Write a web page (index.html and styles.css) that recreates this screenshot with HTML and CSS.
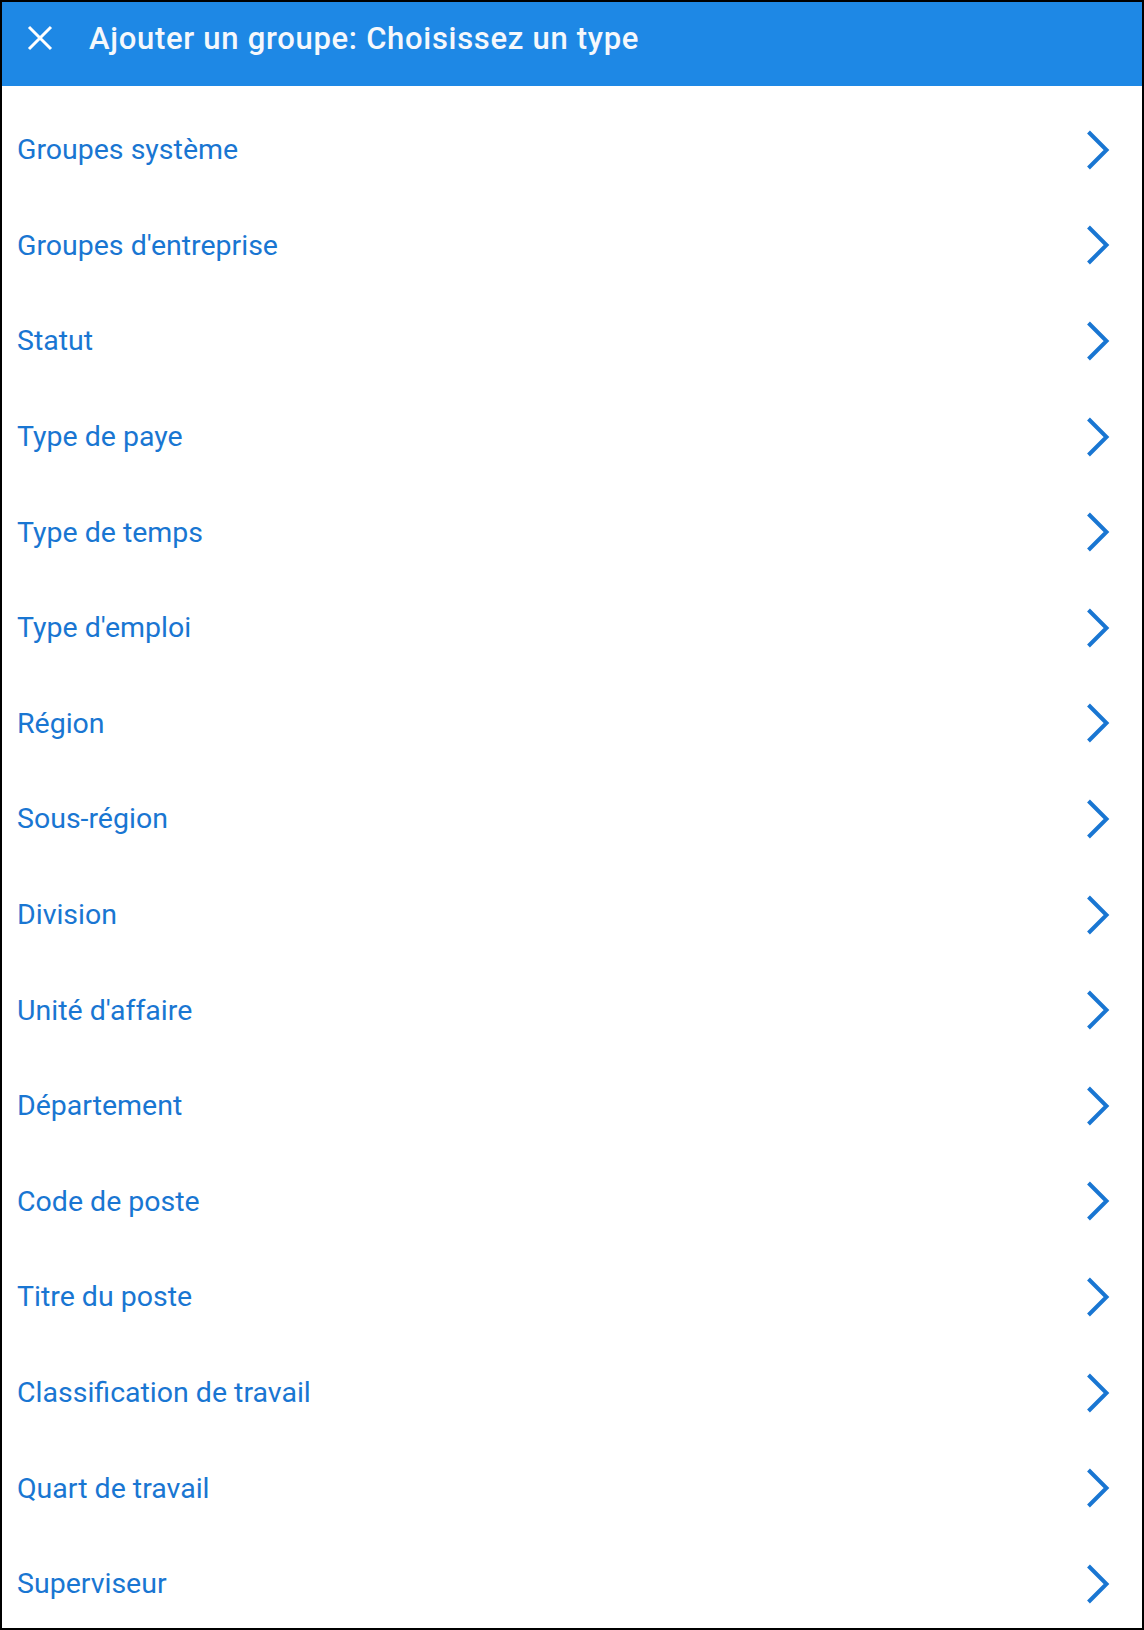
FILE: index.html
```html
<!DOCTYPE html>
<html lang="fr">
<head>
    <meta charset="UTF-8">
    <meta name="viewport" content="width=device-width, initial-scale=1.0">
    <title>Ajouter un groupe</title>
    <link rel="stylesheet" href="styles.css">
</head>
<body>
    <div class="dialog">
        <header class="bar">
            <button class="close" type="button" aria-label="Fermer">
                <svg viewBox="0 0 26 26" width="26" height="26">
                    <path d="M2 2L24 24M24 2L2 24" stroke="#fff" stroke-width="3" fill="none"/>
                </svg>
            </button>
            <h1>Ajouter un groupe: Choisissez un type</h1>
        </header>

        <ul class="types">
            <li><span>Groupes système</span><i class="chev"></i></li>
            <li><span>Groupes d'entreprise</span><i class="chev"></i></li>
            <li><span>Statut</span><i class="chev"></i></li>
            <li><span>Type de paye</span><i class="chev"></i></li>
            <li><span>Type de temps</span><i class="chev"></i></li>
            <li><span>Type d'emploi</span><i class="chev"></i></li>
            <li><span>Région</span><i class="chev"></i></li>
            <li><span>Sous-région</span><i class="chev"></i></li>
            <li><span>Division</span><i class="chev"></i></li>
            <li><span>Unité d'affaire</span><i class="chev"></i></li>
            <li><span>Département</span><i class="chev"></i></li>
            <li><span>Code de poste</span><i class="chev"></i></li>
            <li><span>Titre du poste</span><i class="chev"></i></li>
            <li><span>Classification de travail</span><i class="chev"></i></li>
            <li><span>Quart de travail</span><i class="chev"></i></li>
            <li><span>Superviseur</span><i class="chev"></i></li>
        </ul>
    </div>

    <script>
        // same chevron in every row
        const chevron = '<svg viewBox="0 0 24 40" width="24" height="40"><path d="M2.5 2L20.5 20 2.5 38" stroke="#1976d2" stroke-width="4" fill="none"/></svg>';
        document.querySelectorAll('.chev').forEach(el => el.innerHTML = chevron);
    </script>
</body>
</html>
```

FILE: styles.css
```css
* {
    margin: 0;
    padding: 0;
    box-sizing: border-box;
}

body {
    font-family: Roboto, "Liberation Sans", sans-serif;
    background: #fff;
}

.dialog {
    width: 1144px;
    height: 1630px;
    border: 2px solid #000;
    overflow: hidden;
    display: flex;
    flex-direction: column;
}

.bar {
    height: 84px;
    flex-shrink: 0;
    background-color: #1e88e5;
    display: flex;
    align-items: flex-start;
    padding: 18px 0 0 25px;
}

.close {
    width: 26px;
    height: 26px;
    border: none;
    background: transparent;
    display: flex;
    margin: 5px 36px 0 0;
    cursor: pointer;
}

.bar h1 {
    color: #f5f8fc;
    font-size: 31px;
    font-weight: 500;
    letter-spacing: 0.7px;
    line-height: 37px;
}

.types {
    list-style: none;
    padding-top: 16px;
}

.types li {
    height: 95.6px;
    display: flex;
    align-items: center;
    justify-content: space-between;
    padding: 0 32px 0 15px;
    color: #1976d2;
    font-size: 28.5px;
    cursor: pointer;
}

.chev {
    display: flex;
}
```
